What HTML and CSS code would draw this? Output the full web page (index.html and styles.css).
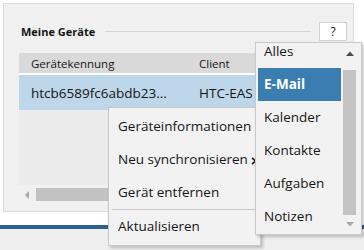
FILE: index.html
```html
<!DOCTYPE html>
<html lang="de">
<head>
    <meta charset="UTF-8">
    <meta name="viewport" content="width=device-width, initial-scale=1.0">
    <title>Meine Geräte</title>
    <link rel="stylesheet" href="styles.css">
</head>
<body>
    <div class="page">
        <section class="panel">
            <div class="panel-head">
                <h2>Meine Geräte</h2>
                <span class="rule"></span>
                <button class="help">?</button>
            </div>
            <div class="grid">
                <div class="grid-head">
                    <div class="col col-id">Gerätekennung</div>
                    <div class="col col-client">Client</div>
                </div>
                <div class="grid-row selected">
                    <div class="col col-id">htcb6589fc6abdb23...</div>
                    <div class="col col-client">HTC-EAS</div>
                </div>
                <div class="grid-body"></div>
                <div class="hscroll">
                    <span class="arrow-left"></span>
                    <span class="thumb"></span>
                </div>
            </div>
        </section>
    </div>
    <div class="footer-bar"></div>
    <div class="footer"></div>

    <ul class="context-menu">
        <li>Geräteinformationen</li>
        <li>Neu synchronisieren<svg class="chevron" width="6" height="8" viewBox="0 0 6 8"><path d="M1 0.8 L4.4 4 L1 7.2" fill="none" stroke="#1a1a1a" stroke-width="1.7"/></svg></li>
        <li>Gerät entfernen</li>
        <li class="separator"></li>
        <li>Aktualisieren</li>
    </ul>

    <div class="dropdown">
        <ul class="options">
            <li>Alles</li>
            <li class="active">E-Mail</li>
            <li>Kalender</li>
            <li>Kontakte</li>
            <li>Aufgaben</li>
            <li>Notizen</li>
        </ul>
        <div class="vscroll">
            <svg class="arrow-up" width="8" height="5" viewBox="0 0 8 5"><path d="M0 5 L4 0.5 L8 5 Z" fill="#4a4a4a"/></svg>
            <span class="track"></span>
            <svg class="arrow-down" width="8" height="5" viewBox="0 0 8 5"><path d="M0 0 L4 4.5 L8 0 Z" fill="#a8a8a8"/></svg>
        </div>
    </div>
</body>
</html>
```

FILE: styles.css
```css
body {
    margin: 0;
    width: 364px;
    height: 250px;
    overflow: hidden;
    font-family: "Open Sans", sans-serif;
    color: #151515;
    background-color: #efefef;
}
.page {
    background-color: #fff;
    padding: 3px 10px 13px 3px;
}
.panel {
    box-sizing: border-box;
    width: 351px;
    height: 209px;
    border: 1px solid #dcdcdc;
    background-color: #f0f0f0;
    padding: 18px 6px 10px 15px;
}
.panel-head {
    display: flex;
    align-items: center;
    height: 19px;
}
.panel-head h2 {
    margin: 0 0 0 2px;
    font-size: 11px;
    font-weight: bold;
    white-space: nowrap;
}
.rule {
    flex: 1;
    height: 1px;
    background-color: #d6d6d6;
    margin: 0 8px 1px 10px;
}
.help {
    box-sizing: border-box;
    width: 28px;
    height: 19px;
    padding: 0;
    border: 1px solid #d2d2d2;
    background-color: #fff;
    font-family: "Open Sans", sans-serif;
    font-size: 12px;
    color: #151515;
}
.grid {
    margin-top: 12px;
}
.grid-head, .grid-row {
    display: flex;
    align-items: center;
    white-space: nowrap;
}
.grid-head {
    height: 20px;
    background-color: #d9d9d9;
    border-bottom: 2px solid #fff;
    font-size: 11.5px;
}
.grid-row {
    height: 35px;
    font-size: 13.5px;
}
.grid-row.selected {
    background-color: #bdd6ea;
}
.col {
    padding-left: 12px;
    box-sizing: border-box;
}
.col-id {
    width: 168px;
}
.grid-body {
    height: 75px;
    background-color: #ebebeb;
}
.hscroll {
    display: flex;
    align-items: center;
    height: 13px;
    margin-top: 3px;
}
.arrow-left {
    width: 0;
    height: 0;
    border-top: 4px solid transparent;
    border-bottom: 4px solid transparent;
    border-right: 4px solid #a8a8a8;
    margin-left: 6px;
}
.thumb {
    width: 250px;
    height: 13px;
    margin-left: 7px;
    background-color: #c2c2c2;
}
.footer-bar {
    height: 4px;
    background-color: #2d618f;
}
.footer {
    height: 21px;
}

.context-menu {
    position: absolute;
    left: 108px;
    top: 107px;
    box-sizing: border-box;
    width: 153px;
    margin: 0;
    padding: 2px 0 2px 0;
    list-style: none;
    border: 1px solid #c9c9c9;
    background-color: #f2f2f2;
    box-shadow: 2px 2px 3px rgba(0, 0, 0, 0.22);
    font-size: 13.5px;
}
.context-menu li {
    height: 33px;
    line-height: 33px;
    padding-left: 9px;
    white-space: nowrap;
}
.context-menu li.separator {
    height: 1px;
    margin-left: 3px;
    padding: 0;
    background-color: #c8c8c8;
}
.chevron {
    margin-left: 3px;
    vertical-align: -0.5px;
}

.dropdown {
    position: absolute;
    left: 255px;
    top: 42px;
    box-sizing: border-box;
    width: 107px;
    height: 193px;
    display: flex;
    overflow: hidden;
    border: 1px solid #c9c9c9;
    background-color: #f2f2f2;
    box-shadow: 2px 2px 3px rgba(0, 0, 0, 0.22);
    font-size: 13.5px;
}
.options {
    width: 83px;
    margin: -8px 0 0 2px;
    padding: 0;
    list-style: none;
}
.options li {
    height: 33px;
    line-height: 33px;
    padding-left: 6px;
    white-space: nowrap;
}
.options li.active {
    background-color: #3a7db1;
    color: #fff;
    font-weight: bold;
}
.vscroll {
    display: flex;
    flex-direction: column;
    align-items: center;
    width: 13px;
    margin-left: 2px;
}
.arrow-up {
    margin-top: 8px;
}
.track {
    width: 13px;
    height: 145px;
    margin-top: 14px;
    background-color: #c3c3c3;
}
.arrow-down {
    margin-top: 7px;
}
```
